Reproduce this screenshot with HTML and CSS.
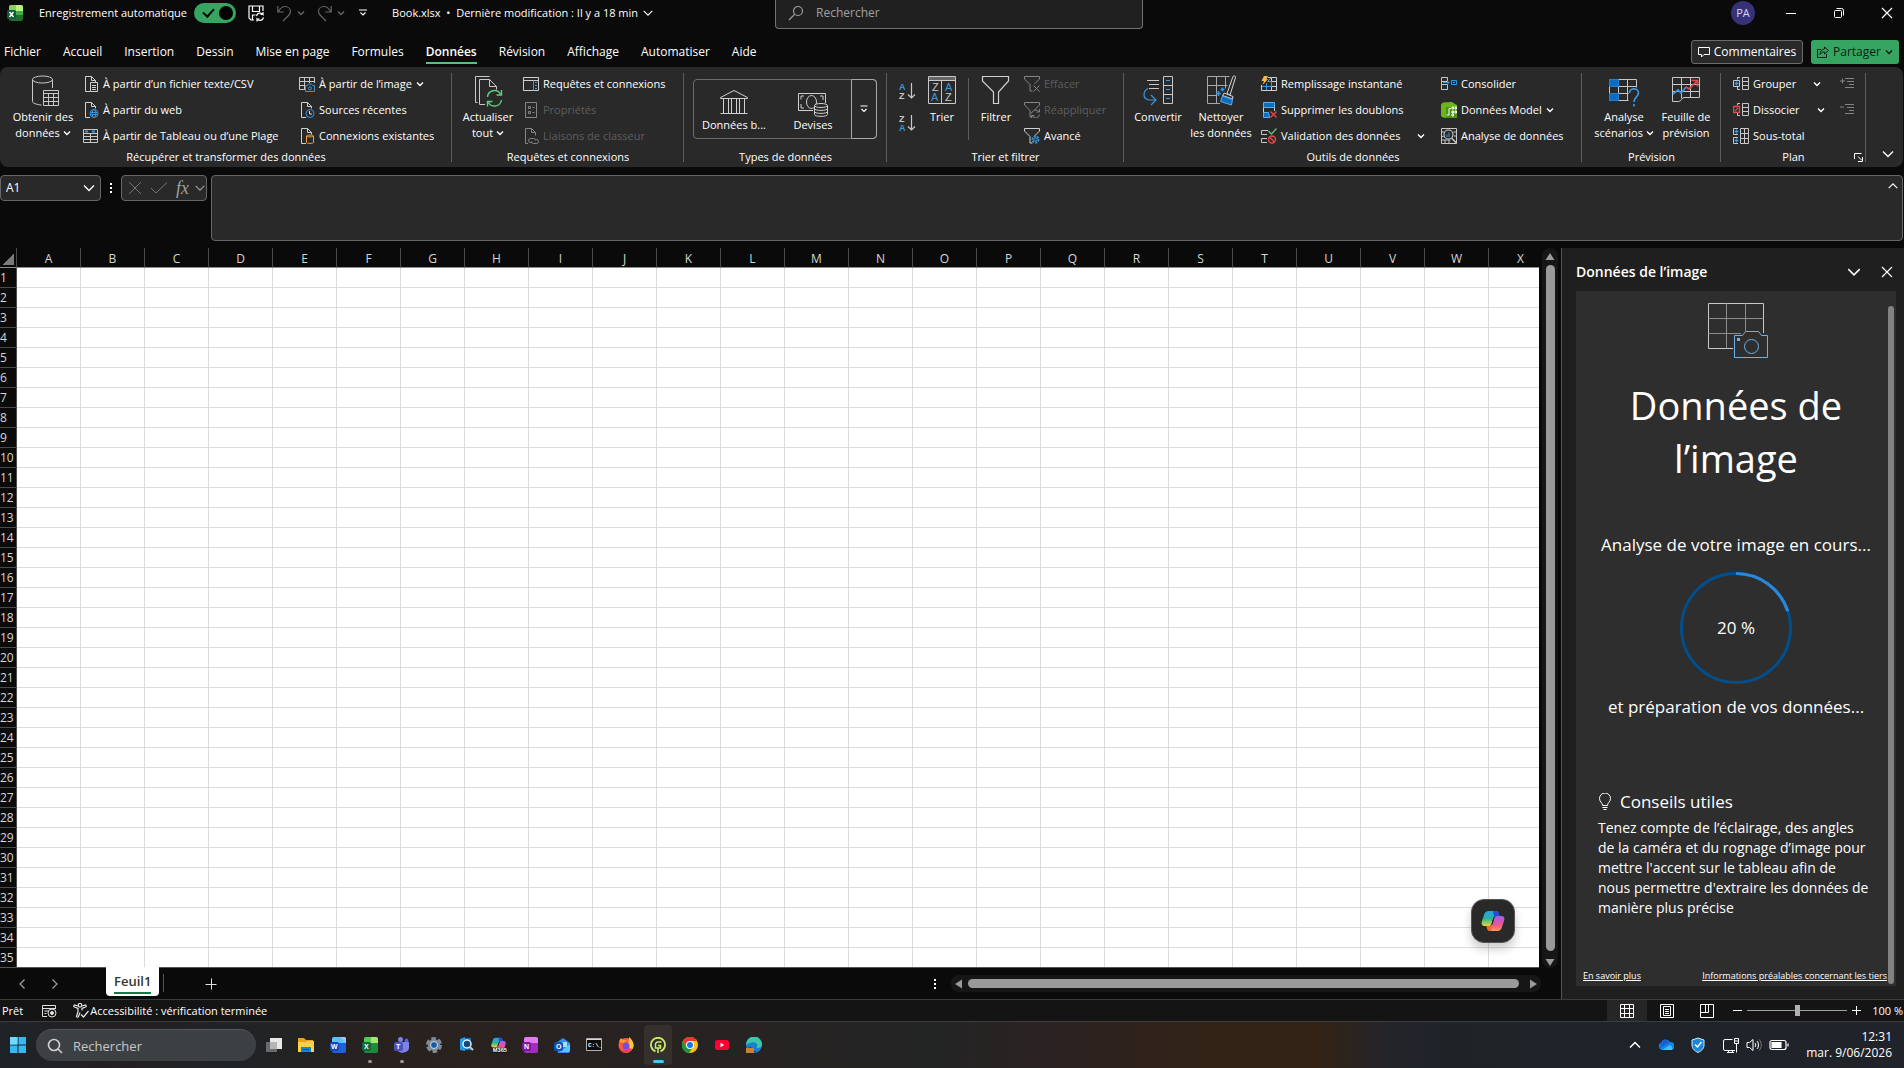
FILE: index.html
```html
<!DOCTYPE html>
<html lang="fr">
<head>
    <meta charset="UTF-8">
    <meta name="viewport" content="width=device-width, initial-scale=1.0">
    <title>Book.xlsx - Excel</title>
    <link rel="stylesheet" href="styles.css">
</head>
<body>
    <svg class="defs" aria-hidden="true">
        <symbol id="chev" viewBox="0 0 8 8"><path d="M1 2.5l3 3 3-3" fill="none" stroke="currentColor" stroke-width="1.4"/></symbol>
        <symbol id="chev-lg" viewBox="0 0 14 14"><path d="M2 4.500l5 5 5-5" fill="none" stroke="currentColor" stroke-width="1.3"/></symbol>
        <symbol id="page" viewBox="0 0 16 16"><path d="M7 15.500H2.500v-15h6l4 4v2M8.500.5v4h4" fill="none" stroke="#d0d0d0"/></symbol>
        <symbol id="funnel" viewBox="0 0 16 16"><path d="M.5.500h15v2.500l-5 5M.5.500V3l5.500 5.500v6.500h2.500" fill="none" stroke="currentColor"/></symbol>
        <symbol id="close" viewBox="0 0 12 12"><path d="M1 1l10 10M11 1L1 11" fill="none" stroke="currentColor" stroke-width="1.2"/></symbol>
        <linearGradient id="gcop1" x1="0" y1="0" x2="0" y2="1"><stop offset="0" stop-color="#2a9df4"/><stop offset=".5" stop-color="#27b59a"/><stop offset="1" stop-color="#f2d13b"/></linearGradient>
        <linearGradient id="gcop2" x1="0" y1="0" x2="0" y2="1"><stop offset="0" stop-color="#a45cf0"/><stop offset=".6" stop-color="#f0568c"/><stop offset="1" stop-color="#ff9a4d"/></linearGradient>
        <symbol id="copilot" viewBox="0 0 24 22">
            <path d="M8 1h7c2 0 2.500 1.500 3 3l.5 2h-3c-2 0-3 1-3.500 3l-1.500 5c-.5 1.500-1.500 2-3 2H4c-3 0-4-2-3-5l2-6c.8-2.500 2-4 5-4z" fill="url(#gcop1)"/>
            <path d="M12 1h3c2 0 2.500 1.500 3 3l.5 2h-3c-1 0-2 .5-2.500 1z" fill="#1d4fd8"/>
            <path d="M16 21H9c-2 0-2.500-1.500-3-3l-.5-2h3c2 0 3-1 3.500-3l1.500-5c.5-1.500 1.500-2 3-2H20c3 0 4 2 3 5l-2 6c-.8 2.500-2 4-5 4z" fill="url(#gcop2)"/>
            <path d="M5.500 16h3c1 0 1.800-.3 2.500-1l-1 6H9c-2 0-2.500-1.500-3-3z" fill="#f0662f"/>
            <path d="M13 8l-1.500 6h-1l2-7z" fill="#2b2b2b"/>
        </symbol>
    </svg>

    <header class="titlebar">
        <div class="title-left">
            <svg class="app-logo" width="16" height="16" viewBox="0 0 16 16"><rect x="2" width="14" height="16" rx="2" fill="#1d6f2b"/><path d="M4 0h5v6H2V2a2 2 0 0 1 2-2z" fill="#8ad05a"/><path d="M9 0h5a2 2 0 0 1 2 2v4H9z" fill="#bdf07c"/><path d="M9 6h7v4H9z" fill="#3fae49"/><rect y="5" width="9" height="9" rx="1.500" fill="#0f5c3a"/><path d="M2.500 7l4 5M6.500 7l-4 5" stroke="#fff" stroke-width="1.400"/></svg>
            <label class="autosave">Enregistrement automatique
                <input type="checkbox" class="switch" checked>
            </label>
            <button class="icon-btn save" aria-label="Enregistrer"><svg width="17" height="17" viewBox="0 0 17 17" fill="none" stroke="#fff" stroke-width="1.200"><path d="M6 15H3L1 13V1h14v5M4.500 1v5.500h7V1M4.500 15v-5h3"/><path d="M8.500 11a3.700 3.700 0 0 1 6.500-1.500V7M15 9.500h-2.500M15.500 12.500A3.700 3.700 0 0 1 9 14v2.500M9 14h2.500"/></svg></button>
            <button class="icon-btn dim" aria-label="Annuler"><svg width="15" height="17" viewBox="0 0 15 17" fill="none" stroke="currentColor" stroke-width="1.200"><path d="M.8 1v6h6M1 7c2-3.500 4-5.500 7-5.500 3.500 0 5.500 2.500 5.500 5 0 1.800-1 3-2 4L6 16"/></svg></button>
            <button class="icon-btn dim arrow" aria-label="Options annuler"><svg width="8" height="8"><use href="#chev"/></svg></button>
            <button class="icon-btn dim" aria-label="Rétablir"><svg width="15" height="17" viewBox="0 0 15 17" fill="none" stroke="currentColor" stroke-width="1.200"><path d="M14.200 1v6h-6M14 7c-2-3.500-4-5.500-7-5.500C3.500 1.500 1.500 4 1.500 6.500c0 1.800 1 3 2 4L9 16"/></svg></button>
            <button class="icon-btn dim arrow" aria-label="Options rétablir"><svg width="8" height="8"><use href="#chev"/></svg></button>
            <button class="icon-btn custom" aria-label="Personnaliser"><svg width="10" height="8" viewBox="0 0 10 8" fill="none" stroke="#fff" stroke-width="1.200"><path d="M1 1h8M2.500 3.500L5 6l2.500-2.500"/></svg></button>
            <button class="doc-title">Book.xlsx&nbsp; •&nbsp; Dernière modification : Il y a 18 min <svg width="12" height="12"><use href="#chev-lg"/></svg></button>
        </div>
        <label class="search">
            <svg width="16" height="16" viewBox="0 0 16 16" fill="none" stroke="#a0a0a0" stroke-width="1.200"><circle cx="10" cy="6" r="4.500"/><path d="M6.800 9.200L1 15"/></svg>
            <input type="text" placeholder="Rechercher" aria-label="Rechercher">
        </label>
        <div class="title-right">
            <span class="avatar">PA</span>
            <button class="win-btn" aria-label="Réduire"><svg width="12" height="12"><path d="M1 6.500h10" stroke="#fff"/></svg></button>
            <button class="win-btn" aria-label="Restaurer"><svg width="12" height="12" fill="none" stroke="#fff"><rect x="1.500" y="3.500" width="7" height="7" rx="1"/><path d="M3.500 1.500h5a2 2 0 0 1 2 2v5"/></svg></button>
            <button class="win-btn" aria-label="Fermer"><svg width="12" height="12"><use href="#close"/></svg></button>
        </div>
    </header>

    <nav class="tabs">
        <button class="tab">Fichier</button>
        <button class="tab">Accueil</button>
        <button class="tab">Insertion</button>
        <button class="tab">Dessin</button>
        <button class="tab">Mise en page</button>
        <button class="tab">Formules</button>
        <button class="tab active">Données</button>
        <button class="tab">Révision</button>
        <button class="tab">Affichage</button>
        <button class="tab">Automatiser</button>
        <button class="tab">Aide</button>
        <div class="tab-actions">
            <button class="comments"><svg width="12" height="12" viewBox="0 0 12 12" fill="none" stroke="#fff"><path d="M.5 1.500h11v7H6L3.500 11V8.500h-3z"/></svg>Commentaires</button>
            <button class="share"><svg width="12" height="12" viewBox="0 0 12 12" fill="none" stroke="#0a1f12"><path d="M4 3.500H.5v8h9V8M7.500 1l4 3.500-4 3.500V6C5 6 4 7 3 8.500 3.200 5.500 4.500 3.300 7.500 3z"/></svg>Partager<svg class="share-chev" width="8" height="8"><use href="#chev"/></svg></button>
        </div>
    </nav>

    <section class="ribbon">
        <div class="group g-get">
            <div class="group-body">
                <button class="big"><svg width="32" height="32" viewBox="-2 0 32 32" fill="none" stroke="#c8c8c8"><ellipse cx="13.500" cy="4.500" rx="10" ry="3.500"/><path d="M3.500 4.500v22c0 1.500 3.500 3 9 3.500M23.500 4.500V13"/><path d="M14.500 15.500h15v15h-15z"/><path d="M14.500 18.500h15M14.500 22.500h15M14.500 26.500h15M19.500 18.500v12M24.500 18.500v12"/></svg><span>Obtenir des<br>données <svg width="8" height="8"><use href="#chev"/></svg></span></button>
                <div class="col">
                    <button class="small"><svg width="16" height="16"><use href="#page"/><path d="M7.500 6.500h7v9h-7zM9 9.500h4M9 11.500h4M9 13.500h4" fill="#292929" stroke="#d0d0d0"/></svg>À partir d’un fichier texte/CSV</button>
                    <button class="small"><svg width="16" height="16"><use href="#page"/><circle cx="11" cy="11.500" r="4" fill="#292929" stroke="#3a96dd"/><ellipse cx="11" cy="11.500" rx="1.800" ry="4" fill="none" stroke="#3a96dd"/><path d="M7 10.500h8M7 12.500h8" stroke="#3a96dd"/></svg>À partir du web</button>
                    <button class="small"><svg width="16" height="16" fill="none" stroke="#c8c8c8"><path d="M.5 1.500h14v13H.5zM.5 5.500h14M.5 8.500h14M.5 11.500h14M7.500 5.500v9"/><path d="M2 3.500h3M9 3.500h3" stroke="#3a96dd" stroke-width="2"/></svg>À partir de Tableau ou d’une Plage</button>
                </div>
                <div class="col">
                    <button class="small"><svg width="16" height="16" fill="none" stroke="#c8c8c8"><path d="M6 13.500H.5v-12h15V7M.5 5.500h15M.5 9.500H6M5.500 1.500v12M10.500 1.500V7"/><path d="M6.500 9.500h2l1-1.500h3l1 1.500h2v6h-9z" stroke="#3a96dd" fill="#292929"/><circle cx="11" cy="12.300" r="1.500" stroke="#3a96dd"/></svg>À partir de l’image <svg width="8" height="8"><use href="#chev"/></svg></button>
                    <button class="small"><svg width="16" height="16"><use href="#page"/><circle cx="11" cy="11.500" r="4" fill="#292929" stroke="#3a96dd"/><path d="M10.500 9v3H13" fill="none" stroke="#ddd"/></svg>Sources récentes</button>
                    <button class="small"><svg width="16" height="16"><use href="#page"/><path d="M7.500 8c0-1.200 7-1.200 7 0v6.500c0 1.200-7 1.200-7 0zM7.500 8c0 1.200 7 1.200 7 0" fill="#292929" stroke="#f2a33c"/></svg>Connexions existantes</button>
                </div>
            </div>
            <div class="group-label">Récupérer et transformer des données</div>
        </div>

        <div class="group g-queries">
            <div class="group-body">
                <button class="big"><svg width="32" height="32" viewBox="0 0 32 32" fill="none" stroke="#c8c8c8"><path d="M5.500 27.500h-2v-26h14"/><path d="M13 29.500H7.500v-25h10l7 7v3M17.500 4.500v7h7"/><path d="M15.500 22a7 7 0 0 1 13-3M29.500 25a7 7 0 0 1-13 2.500M29.500 15v5h-5M15.500 31.500v-5h5" stroke="#5fd07a" stroke-width="1.400"/></svg><span>Actualiser<br>tout <svg width="8" height="8"><use href="#chev"/></svg></span></button>
                <div class="col">
                    <button class="small"><svg width="16" height="16" fill="none" stroke="#d0d0d0"><path d="M.5 1.500h15v13H.5zM.5 4.500h15"/><path d="M10.500 4.500v10M12 6.500h2M12 9.500h2M12 12.500h2" stroke="#3a96dd"/></svg>Requêtes et connexions</button>
                    <button class="small" disabled><svg width="16" height="16" fill="none" stroke="#858585"><path d="M2.500.500h11v15h-11zM5.500 4.500h2v2h-2zM5.500 9.500h2v2h-2zM9.500 5.500h2M9.500 10.500h2"/></svg>Propriétés</button>
                    <button class="small" disabled><svg width="16" height="16" fill="none" stroke="#858585"><path d="M5 15.500H2.500v-15h6l4 4v3M8.500.500v4h4"/><path d="M9 14.500H7.500a2 2 0 0 1 0-4h3a2 2 0 0 1 2 2M13 11.500h.5a2 2 0 0 1 0 4h-3a2 2 0 0 1-2-2"/></svg>Liaisons de classeur</button>
                </div>
            </div>
            <div class="group-label">Requêtes et connexions</div>
        </div>

        <div class="group g-types">
            <div class="group-body">
                <div class="gallery">
                    <button class="type"><svg width="30" height="28" viewBox="0 0 30 28" fill="none" stroke="#d0d0d0"><path d="M1.500 8.500L15 1.500l13.500 7v1h-27zM4.500 10v14M25.500 10v14M9.500 10v14M12.500 10v14M17.500 10v14M20.500 10v14M1.500 24.500h27"/></svg>Données b...</button>
                    <button class="type"><svg width="32" height="28" viewBox="0 0 32 28" fill="none" stroke="#d0d0d0"><path d="M16 21.500H1.500v-17h27V14"/><path d="M7 7H4v3.500M4 15v4h3M23 7h3v4"/><ellipse cx="14.500" cy="13" rx="5" ry="6.500"/><path d="M17.500 16.500v9c0 2.500 13 2.500 13 0v-9M17.500 19.500c0 2.500 13 2.500 13 0M17.500 22.500c0 2.500 13 2.500 13 0" fill="#292929"/><ellipse cx="24" cy="16.500" rx="6.500" ry="2" fill="#292929"/></svg>Devises</button>
                    <button class="more" aria-label="Autres"><svg width="8" height="8" viewBox="0 0 8 8" fill="none" stroke="#fff" stroke-width="1.200"><path d="M.5 1h7M1.500 4L4 6.500 6.500 4"/></svg></button>
                </div>
            </div>
            <div class="group-label">Types de données</div>
        </div>

        <div class="group g-sort">
            <div class="group-body">
                <div class="sort-col">
                    <button aria-label="Trier de A à Z"><svg width="18" height="20" viewBox="0 0 18 20"><text x="1" y="9" class="az blue">A</text><text x="1" y="18" class="az">Z</text><path d="M13.500 2v15M10 13.500l3.500 3.500 3.500-3.500" fill="none" stroke="#c8c8c8" stroke-width="1.200"/></svg></button>
                    <button aria-label="Trier de Z à A"><svg width="18" height="20" viewBox="0 0 18 20"><text x="1" y="9" class="az">Z</text><text x="1" y="18" class="az blue">A</text><path d="M13.500 2v15M10 13.500l3.500 3.500 3.500-3.500" fill="none" stroke="#c8c8c8" stroke-width="1.200"/></svg></button>
                </div>
                <button class="big trier"><svg width="32" height="32" viewBox="0 0 32 32"><path d="M2.500 1.500h27v27h-27zM2.500 5.500h27M15.500 5.500v23" fill="none" stroke="#c8c8c8"/><path d="M3 2h26v3H3z" fill="#666"/><text x="6" y="16" class="az lg">Z</text><text x="5" y="26" class="az lg blue">A</text><text x="19" y="16" class="az lg blue">A</text><text x="19" y="26" class="az lg">Z</text></svg><span>Trier</span></button>
                <i class="sep"></i>
                <button class="big filtrer"><svg width="32" height="32" viewBox="0 0 32 32" fill="none" stroke="#d0d0d0" stroke-width="1.200"><path d="M2.500 1.500h26v4.500L18.500 17v11.500h-5V17L2.500 6z"/></svg><span>Filtrer</span></button>
                <div class="col">
                    <button class="small" disabled><svg class="gray" width="16" height="16"><use href="#funnel"/><path d="M9.500 9.500l6 6M15.500 9.500l-6 6" stroke="#858585"/></svg>Effacer</button>
                    <button class="small" disabled><svg class="gray" width="16" height="16"><use href="#funnel"/><path d="M7.500 11.500a4 4 0 0 1 7-2M15.500 7v3h-3M15.500 12.500a4 4 0 0 1-7 2M7.500 16v-2.500h3" fill="none" stroke="#858585"/></svg>Réappliquer</button>
                    <button class="small"><svg class="light" width="16" height="16"><use href="#funnel"/><circle cx="11.500" cy="11.500" r="3" fill="#292929" stroke="#3a96dd" stroke-width="2" stroke-dasharray="2 1"/><circle cx="11.500" cy="11.500" r="1.500" fill="none" stroke="#3a96dd"/></svg>Avancé</button>
                </div>
            </div>
            <div class="group-label">Trier et filtrer</div>
        </div>

        <div class="group g-tools">
            <div class="group-body">
                <button class="big"><svg width="32" height="32" viewBox="0 0 32 32" fill="none" stroke="#c8c8c8"><path d="M5 5.500h12M7 9.500h10M7 13.500h10M21.500 1.500h9v27h-9zM21.500 10.500h9M21.500 19.500h9"/><path d="M24 5.500h4M24 14.500h4M24 23.500h4M6 13.500c-5 2.500-6 10.500 1 11.500h6.500M9 20l5 5-5 5" stroke="#3a96dd" stroke-width="1.200"/></svg><span>Convertir</span></button>
                <button class="big"><svg width="32" height="32" viewBox="0 0 32 32" fill="none" stroke="#a8a8a8"><path d="M15 28.500H2.500v-27h22M2.500 10.500h20M2.500 20.500h9M11.500 1.500v27M20.500 1.500v12"/><path d="M28 1.500c1-1 3-.5 2.500 1L25 20l-3-1.500z" fill="#292929" stroke="#d8d8d8"/><path d="M19 18l9 3.500-.5 2.500-10-3.500z" fill="#292929" stroke="#d8d8d8"/><path d="M17.500 21l10 3.500-1 5.500-11-3.500z" fill="#0f6cbd" stroke="#58aef0"/><path d="M13.500 16v5M11 18.500h5M17.500 12.500v4M15.500 14.500h4" stroke="#3a96dd" stroke-width="1.600"/></svg><span>Nettoyer<br>les données</span></button>
                <div class="col">
                    <button class="small"><svg width="16" height="16" fill="none"><path d="M7 1.500h8.500v13H.5V9M.5 10.500h15M5.500 7v7.500M10.500 1.500v13M7 5.500h8.500" stroke="#d0d0d0"/><path d="M10.500 5.500v5M10.500 5.500h-3M1 10.500h10M10.500 1.500l-4 4M5.500 14V7" stroke="#3a96dd"/><path d="M3 0h4L5.500 3H7L1.500 9 3 5H.5z" fill="#f7b84b"/></svg>Remplissage instantané</button>
                    <button class="small"><svg width="16" height="16"><path d="M2.500.500h11v5h-11zM2.500 10.500h5l1 5h-6z" fill="#0f6cbd" stroke="#58aef0"/><path d="M2.500 5.500v5M13.500 5.500V9" stroke="#d0d0d0"/><path d="M9.500 9.500l6 6M15.500 9.500l-6 6" stroke="#e8474c" stroke-width="1.300"/></svg>Supprimer les doublons</button>
                    <button class="small"><svg width="16" height="16" fill="none" stroke="#c8c8c8"><path d="M7 2.500H.5v4H6M6 10.500H.5v4H6"/><path d="M7.500 3l3 3L15.500.500" stroke="#5fc27a" stroke-width="1.300"/><circle cx="11" cy="11.500" r="3.500" stroke="#e8474c" stroke-width="1.400"/><path d="M8.500 9l5 5" stroke="#e8474c" stroke-width="1.400"/></svg>Validation des données<svg class="far" width="8" height="8"><use href="#chev"/></svg></button>
                </div>
                <div class="col">
                    <button class="small"><svg width="16" height="16" fill="none" stroke="#c8c8c8"><path d="M6.500 4V1.500h-6v4h6V4M.5 5.500v3M6.500 10v3.500h-6v-5h6V10"/><path d="M2 6.500h6M6 4.500l2 2-2 2M10.500 4.500h5v4h-5zM12 6.500h2" stroke="#3a96dd"/></svg>Consolider</button>
                    <button class="small"><svg width="16" height="16"><path d="M0 2.500L2 .500 11 0l3 2 2 1v12l-3 1H4l-3-1-1-1z" fill="#6bb51c"/><path d="M5 5h11v11H5z" fill="#4c9410"/><path d="M5.500 13H8V6.500M8 6.500h2M11 5h1.500v2H11zM14 5h1.500v2H14zM11 9h1.500v2H11zM14 9h1.500v2H14zM11 12h1.500v2H11z" fill="none" stroke="#fff"/></svg>Données Model <svg width="8" height="8"><use href="#chev"/></svg></button>
                    <button class="small"><svg width="16" height="16" fill="none" stroke="#c8c8c8"><path d="M.5.500h15v15H.5zM.5 4h3M.5 8.500h2M.5 12h9M4 12v3M8 12v3M12.500 4h3M13 8h2.500"/><circle cx="7.500" cy="6.500" r="4.500" fill="#292929" stroke-width="1.200"/><path d="M10.500 10l5 5" stroke-width="1.500"/><path d="M6 9V6.500M8 9V4.500" stroke="#3a96dd"/></svg>Analyse de données</button>
                </div>
            </div>
            <div class="group-label">Outils de données</div>
        </div>

        <div class="group g-forecast">
            <div class="group-body">
                <button class="big"><svg width="32" height="32" viewBox="0 0 32 32" fill="none" stroke="#c8c8c8"><path d="M1.500 4.500h27v8M1.500 25.500h19M1.500 4.500v21M10.500 4.500v21M19.500 4.500v21M1.500 11.500h27M1.500 18.500h19"/><path d="M1.500 4.500h9v7h-9zM1.500 18.500h9v7h-9z" fill="#0f6cbd" stroke="#1f7fd4"/><path d="M21.500 18c0-5.500 9-5.500 9 0 0 4-4.500 4-4.500 9M26 29v2.500" stroke="#3a96dd" stroke-width="1.700"/></svg><span>Analyse<br>scénarios <svg width="8" height="8"><use href="#chev"/></svg></span></button>
                <button class="big"><svg width="32" height="32" viewBox="0 0 32 32" fill="none" stroke="#c8c8c8"><path d="M14 22.500h15.500v-20h-27v24h6c3 0 3-4 6-4M2.500 9.500h27M2.500 16.500h27M11.500 2.500v21M20.500 2.500v20"/><path d="M3 19l5-4 3 3 5-6" stroke="#3a96dd" stroke-width="1.700"/><path d="M16 12l3 2 8-8M21.500 5.500H27.500v6" stroke="#e8474c" stroke-width="1.700"/></svg><span>Feuille de<br>prévision</span></button>
            </div>
            <div class="group-label">Prévision</div>
        </div>

        <div class="group g-plan">
            <div class="group-body">
                <div class="col">
                    <button class="small"><svg width="16" height="16" fill="none" stroke="#c8c8c8"><path d="M7 1.500H4.500v2M4.500 11v2.500H7M9.500 1.500h6v12h-6zM9.500 5.500h6M9.500 9.500h6"/><path d="M.5 4.500h6v6h-6z"/><path d="M3.500 5.500v4M1.500 7.500h4" stroke="#3a96dd" stroke-width="1.500"/></svg>Grouper<svg class="far" width="8" height="8"><use href="#chev"/></svg></button>
                    <button class="small"><svg width="16" height="16" fill="none" stroke="#c8c8c8"><path d="M7 1.500H4.500v2M4.500 11v2.500H7M9.500 1.500h6v12h-6zM9.500 5.500h6M9.500 9.500h6"/><path d="M.5 4.500h6v6h-6zM2 9l3-3" stroke="#e8474c" stroke-width="1.300"/></svg>Dissocier<svg class="far" width="8" height="8"><use href="#chev"/></svg></button>
                    <button class="small"><svg width="16" height="16" fill="none" stroke="#c8c8c8"><path d="M7.500.500h8v15h-8zM7.500 5.500h8M7.500 10.500h8M11.500.500v15M5 .5H.5v6H5M5 9.500H.5v6H5"/><path d="M3.500 1.500v4M1.500 3.500h4M3.500 10.500v4M1.500 12.500h4" stroke="#3a96dd" stroke-width="1.300"/></svg>Sous-total</button>
                </div>
                <div class="col outline-col">
                    <button class="small" aria-label="Afficher les détails" disabled><svg width="16" height="16" fill="none" stroke="#858585"><path d="M1 5h5M3.500 2.500v5M6 2.500h9M8 5.500h7M10 8.500h5M6 11.500h9"/></svg></button>
                    <button class="small" aria-label="Masquer" disabled><svg width="16" height="16" fill="none" stroke="#858585"><path d="M1 5h4M6 2.500h9M8 5.500h7M10 8.500h5M6 11.500h9"/></svg></button>
                </div>
            </div>
            <div class="group-label">Plan<button class="launcher" aria-label="Paramètres du plan"><svg width="9" height="9" fill="none" stroke="#fff"><path d="M.5 6V.500h7M4 3.500l4 4M8.500 4v4.500H4"/></svg></button></div>
        </div>
        <button class="collapse" aria-label="Réduire le ruban"><svg width="14" height="14"><use href="#chev-lg"/></svg></button>
    </section>

    <section class="formula-row">
        <div class="name-box"><input type="text" value="A1" aria-label="Zone Nom"><svg width="14" height="14"><use href="#chev-lg"/></svg></div>
        <svg class="dots" width="4" height="12" fill="#fff"><path d="M1 1h2v2H1zM1 5h2v2H1zM1 9h2v2H1z"/></svg>
        <div class="fx-box">
            <button aria-label="Annuler la saisie"><svg width="14" height="14" fill="none" stroke="#777"><path d="M1 1l12 12M13 1L1 13"/></svg></button>
            <button aria-label="Valider"><svg width="18" height="14" fill="none" stroke="#777"><path d="M1 7l5 5L17 1.500"/></svg></button>
            <button class="fx">fx<svg width="12" height="12"><use href="#chev-lg"/></svg></button>
        </div>
        <div class="formula"><textarea aria-label="Barre de formule"></textarea><svg class="flip" width="12" height="12"><use href="#chev-lg"/></svg></div>
    </section>

    <main class="workspace">
        <section class="book">
            <div class="sheet-row">
                <div class="sheet">
                    <table id="grid"></table>
                    <button class="copilot" aria-label="Copilot"><svg width="24" height="22"><use href="#copilot"/></svg></button>
                </div>
                <div class="vscroll"><svg width="10" height="8"><path d="M5 0l4.500 7h-9z" fill="#9a9a9a"/></svg><i></i><svg width="10" height="8"><path d="M.5 1h9L5 8z" fill="#9a9a9a"/></svg></div>
            </div>
            <div class="sheet-tabs">
                <button class="nav-arrow" aria-label="Feuille précédente"><svg width="8" height="12" fill="none" stroke="#a0a0a0" stroke-width="1.200"><path d="M6.500 1.500L2 6l4.500 4.500"/></svg></button>
                <button class="nav-arrow" aria-label="Feuille suivante"><svg width="8" height="12" fill="none" stroke="#a0a0a0" stroke-width="1.200"><path d="M1.500 1.500L6 6l-4.500 4.500"/></svg></button>
                <button class="sheet-tab"><span>Feuil1</span></button>
                <button class="add" aria-label="Nouvelle feuille"><svg width="12" height="12" stroke="#e0e0e0"><path d="M.5 6.500h11M6.500.500v11"/></svg></button>
                <svg class="dots" width="4" height="12" fill="#fff"><path d="M1 1h2v2H1zM1 5h2v2H1zM1 9h2v2H1z"/></svg>
                <div class="hscroll"><svg width="8" height="10"><path d="M7 .5v9L0 5z" fill="#9a9a9a"/></svg><i></i><svg width="8" height="10"><path d="M1 .5v9L8 5z" fill="#9a9a9a"/></svg></div>
            </div>
        </section>

        <aside class="panel">
            <div class="panel-head">
                <h2>Données de l’image</h2>
                <button aria-label="Options du volet"><svg width="16" height="16"><use href="#chev-lg"/></svg></button>
                <button aria-label="Fermer le volet"><svg width="12" height="12"><use href="#close"/></svg></button>
            </div>
            <div class="panel-body">
                <svg class="hero" width="56" height="56" fill="none" stroke="#c8c8c8"><path d="M25 45.500H.5V.500h55V30"/><path d="M.5 15.500h55M.5 30.500H33M18.500.500v45M37.500.500V28" stroke="#8c8c8c"/><path d="M26.500 32.500h8l3-4h13l3 4h6v22h-33z" fill="#2e2e2e" stroke="#6cb2e6"/><circle cx="43.500" cy="43.500" r="7" stroke="#6cb2e6"/><path d="M29 35h3v3h-3z" fill="#6cb2e6" stroke="none"/></svg>
                <h1>Données de l’image</h1>
                <p class="step">Analyse de votre image en cours...</p>
                <div class="progress">
                    <svg width="112" height="112" viewBox="0 0 112 112" fill="none" stroke-width="3"><circle cx="56" cy="56" r="54.500" stroke="#004e8c"/><path d="M56 1.500A54.500 54.500 0 0 1 107.800 39.200" stroke="#2b88d8"/></svg>
                    <span>20 %</span>
                </div>
                <p class="step">et préparation de vos données...</p>
                <h3><svg width="14" height="18" viewBox="0 0 14 18" fill="none" stroke="#fff"><path d="M4.500 12.500c0-3-3-3.500-3-7a5.500 5.500 0 0 1 11 0c0 3.500-3 4-3 7zM4.500 14.500h5M5.500 16.500h3"/></svg>Conseils utiles</h3>
                <p class="tips">Tenez compte de l’éclairage, des angles de la caméra et du rognage d’image pour mettre l'accent sur le tableau afin de nous permettre d'extraire les données de manière plus précise</p>
                <div class="links"><a href="#">En savoir plus</a><a href="#">Informations préalables concernant les tiers</a></div>
                <i class="panel-thumb"></i>
            </div>
        </aside>
    </main>

    <footer class="status">
        <span>Prêt</span>
        <svg class="macro" width="15" height="14" fill="none" stroke="#e0e0e0"><path d="M5 12.500H.5v-11h13V5M.5 4.500h13M2.500 7h4M2.500 9.500h2"/><circle cx="10" cy="9" r="4"/><circle cx="10" cy="9" r="1.500" fill="#e0e0e0"/></svg>
        <button class="access"><svg width="16" height="15" fill="none" stroke="#e8e8e8" stroke-width="1.200"><circle cx="7" cy="2.300" r="1.800"/><path d="M5 3L1.500 2c-1 .5-1 1.500 0 2L5 5.500v3l-1.500 5c.5 1 1.500 1 2 0L7 9.500M9 3l3.500-1c1 .5 1 1.500 0 2L9 5.500v2M8 11.500l2.500 2.500 5-6"/></svg>Accessibilité : vérification terminée</button>
        <div class="views">
            <button class="view on" aria-label="Normal"><svg width="14" height="14" fill="none" stroke="#fff"><path d="M.5.500h13v13H.5zM.5 4.500h13M.5 9.500h13M4.500.500v13M9.500.500v13"/></svg></button>
            <button class="view" aria-label="Mise en page"><svg width="14" height="14" fill="none" stroke="#fff"><path d="M.5.500h13v13H.5zM3.500 2.500h7v9h-7zM5 5.500h4M5 7.500h4M5 9.500h4"/></svg></button>
            <button class="view" aria-label="Sauts de page"><svg width="14" height="14" fill="none" stroke="#fff"><path d="M.5.500h13v13H.5zM.5 8.500h8v-8M5.500.500v8"/></svg></button>
        </div>
        <button aria-label="Zoom arrière"><svg width="9" height="9" stroke="#fff"><path d="M0 4.500h9"/></svg></button>
        <input type="range" class="zoom" min="0" max="100" value="50" aria-label="Zoom">
        <button aria-label="Zoom avant"><svg width="9" height="9" stroke="#fff"><path d="M0 4.500h9M4.500 0v9"/></svg></button>
        <span class="pct">100 %</span>
    </footer>

    <footer class="taskbar">
        <button class="start" aria-label="Démarrer"><svg width="16" height="16"><path d="M0 0h7.500v7.500H0zM8.500 0H16v7.500H8.500zM0 8.500h7.500V16H0zM8.500 8.500H16V16H8.500z" fill="#35b8f5"/><path d="M0 0h7.500v7.500H0z" fill="#6fdcff"/></svg></button>
        <label class="task-search"><svg width="16" height="16" fill="none" stroke="#d0d0d0" stroke-width="1.600"><circle cx="7" cy="7" r="5.500"/><path d="M11 11l4 4"/></svg><input type="text" placeholder="Rechercher" aria-label="Rechercher dans Windows"></label>
        <div class="apps">
            <button aria-label="Vue des tâches"><svg width="16" height="16"><path d="M0 5h11v10H0z" fill="#6b6b6b"/><path d="M4 1h12v11H4z" fill="#e8e8e8"/><path d="M4 5h7v7H4z" fill="#b5b5b5"/></svg></button>
            <button aria-label="Explorateur"><svg width="16" height="16"><path d="M0 1h6l2 2h7v4H0z" fill="#e8a317"/><path d="M0 5h8l1-1h7v11H0z" fill="#ffcf48"/><path d="M3 10h10v5H3z" fill="#1683d8"/><path d="M5 12.500h6" stroke="#0a4f8f"/></svg></button>
            <button aria-label="Word"><svg width="16" height="16"><rect x="2" width="14" height="16" rx="2" fill="#1f5fe0"/><path d="M4 0h10a2 2 0 0 1 2 2v4H2V2a2 2 0 0 1 2-2z" fill="#5cc0ff"/><path d="M10 0h4a2 2 0 0 1 2 2v4z" fill="#a9c0ff"/><rect y="5" width="9" height="9" rx="2" fill="#1746b8"/><text x="1" y="12" class="logo">W</text></svg></button>
            <button class="running" aria-label="Excel"><svg width="16" height="16"><rect x="2" width="14" height="16" rx="2" fill="#1f8a3c"/><path d="M4 0h5v6H2V2a2 2 0 0 1 2-2z" fill="#55c95a"/><path d="M9 0h5a2 2 0 0 1 2 2v4H9z" fill="#a4e86a"/><rect y="5" width="9" height="9" rx="2" fill="#0f6b3a"/><text x="2" y="12" class="logo">X</text></svg></button>
            <button class="running" aria-label="Teams"><svg width="16" height="16"><circle cx="6.500" cy="2.500" r="2.500" fill="#7b83eb"/><circle cx="12.500" cy="3.500" r="2" fill="#5a62d6"/><path d="M3 5h12v6c0 5-11 7-12 1z" fill="#7b83eb"/><rect y="5" width="9" height="9" rx="2" fill="#4b53bc"/><text x="2" y="12" class="logo">T</text></svg></button>
            <button aria-label="Paramètres"><svg width="16" height="16"><circle cx="8" cy="8" r="6" fill="#7f8b97"/><circle cx="8" cy="8" r="6.500" fill="none" stroke="#7f8b97" stroke-width="3" stroke-dasharray="4.500 2.300"/><circle cx="8" cy="8" r="3.500" fill="#0f5ca8" stroke="#d7dde3"/></svg></button>
            <button aria-label="Recherche de fichiers"><svg width="16" height="16"><path d="M2 2l5-2v14l-5-1z" fill="#1f9be8"/><path d="M7 1h6v12H7z" fill="#0f6fc2"/><circle cx="9" cy="7" r="4" fill="#164a7a" stroke="#e6f2ff" stroke-width="1.500"/><path d="M12 10l3 3" stroke="#ccc" stroke-width="2"/></svg></button>
            <button aria-label="Microsoft 365 Copilot"><svg width="17" height="16" viewBox="0 0 24 22"><use href="#copilot" width="24" height="20"/><path d="M3 15h21v7H3z" fill="#111"/><text x="4" y="21" class="m365">M365</text></svg></button>
            <button aria-label="OneNote"><svg width="16" height="16"><rect x="2" width="14" height="16" rx="2" fill="#a32bc0"/><path d="M4 0h10a2 2 0 0 1 2 2v4H2V2a2 2 0 0 1 2-2z" fill="#e07cf0"/><rect y="5" width="9" height="9" rx="2" fill="#7a1a94"/><text x="2" y="12" class="logo">N</text></svg></button>
            <button aria-label="Outlook"><svg width="16" height="16"><path d="M2 6l7-5 7 5v8a2 2 0 0 1-2 2H4z" fill="#2f8df0"/><path d="M5 5h8v5H5z" fill="#a8dcff"/><path d="M16 7L6 15h8a2 2 0 0 0 2-2z" fill="#5cc6ff"/><rect y="5" width="9" height="9" rx="2" fill="#0f52b8"/><text x="2" y="12" class="logo">O</text></svg></button>
            <button aria-label="Invite de commandes"><svg width="16" height="14"><path d="M.5.500h15v12H.5z" fill="#0c0c0c" stroke="#b0b0b0"/><path d="M1 1.500h14" stroke="#d8d8d8"/><text x="2" y="9" class="cmd">C:\_</text></svg></button>
            <button aria-label="Firefox"><svg width="16" height="16"><circle cx="8" cy="8.500" r="7.500" fill="#ff5a36"/><path d="M11 0c4 3 6 8 3.500 12l-5-2 1-5z" fill="#ffc43a"/><path d="M1 5c1-3 2-4 2-4l2 2h4l-3 3z" fill="#ff9a2e"/><circle cx="8" cy="9" r="3.500" fill="#7a4be0"/><path d="M1.500 12c3 4 9 4 12 0-4 1-8 2-12 0z" fill="#f0337a"/></svg></button>
            <button class="current" aria-label="Greenshot"><svg width="16" height="16" fill="none" stroke="#cdec6c"><path d="M5.500 14.300a7 7 0 1 1 5 0" stroke-width="1.800"/><path d="M11.500 5H8a2.500 2.500 0 0 0-2.500 2.500V11h5V8.500H8M8 11v5" stroke-width="1.500"/></svg></button>
            <button aria-label="Chrome"><svg width="16" height="16"><circle cx="8" cy="8" r="8" fill="#fbc116"/><path d="M1 4A8 8 0 0 1 15 4H8l-3.500 6z" fill="#e33b2e"/><path d="M1 4a8 8 0 0 0 6 12l4-6-6.500 0z" fill="#229342"/><circle cx="8" cy="8" r="4" fill="#fff"/><circle cx="8" cy="8" r="3" fill="#1a73e8"/></svg></button>
            <button aria-label="YouTube"><svg width="14" height="10"><rect width="14" height="10" rx="2.500" fill="#ff0033"/><path d="M5.500 2.800v4.400L9.200 5z" fill="#fff"/></svg></button>
            <button aria-label="Edge"><svg width="16" height="16"><circle cx="8" cy="8" r="8" fill="#1b7fcf"/><path d="M0 8a8 8 0 0 1 16-1c0 3-2 4-5 4-1-1 1-2 0-4s-6-3-11 1z" fill="#3cc8a8"/><path d="M5 9c0 3 2 5 6 5-3 3-8 2-10-2z" fill="#0f4d94"/><path d="M0 11h8v5H0z" fill="#c9812a"/></svg></button>
        </div>
        <div class="tray">
            <button aria-label="Icônes masquées"><svg width="12" height="8" fill="none" stroke="#fff" stroke-width="1.500"><path d="M1 6.500l5-5 5 5"/></svg></button>
            <button aria-label="OneDrive"><svg width="16" height="12"><path d="M4 11a4 4 0 0 1-1-7.500A5 5 0 0 1 12 3a4 4 0 0 1 1 8z" fill="#1583e8"/><path d="M4 11l8-5a4 4 0 0 1 2 5z" fill="#3cc0ff"/><path d="M3 3.500A5 5 0 0 1 12 3L2 9z" fill="#1a5fd0"/></svg></button>
            <button aria-label="Sécurité"><svg width="14" height="16"><path d="M7 1l6 2v5c0 4-3 6-6 7.500C4 14 1 12 1 8V3z" fill="#1a86dd" stroke="#d5e8f7"/><path d="M4 7.500L6.500 10 10.500 5" fill="none" stroke="#fff" stroke-width="1.500"/></svg></button>
            <button class="sys" aria-label="Réseau, son et batterie"><svg width="17" height="17" fill="none" stroke="#fff"><path d="M10.500 2.500H3a1.500 1.500 0 0 0-1.500 1.500v8A1.500 1.500 0 0 0 3 13.500h10M5 15.500h7M6.500 13.500v2M10.500 13.500v2M12.500 1.500h4v5h-4zM12.500 4h4M14.500 6.500v9"/></svg><svg width="16" height="14" fill="none" stroke="#fff"><path d="M1 4.500h2.500L7 1.500v11l-3.500-3H1zM9 5c1 1 1 3 0 4M11 3c2 2 2 6 0 8"/><path d="M13 1.500c3 3 3 8 0 11" stroke="#777"/></svg><svg width="20" height="12" fill="none" stroke="#fff" stroke-width="1.200"><rect x="1" y="1.500" width="16" height="9" rx="2"/><path d="M3 3.500h9v5H3z" fill="#fff"/><path d="M19 4.500v3"/></svg></button>
            <button class="clock">12:31<br>mar. 9/06/2026</button>
        </div>
    </footer>

    <script>
        const table = document.getElementById('grid');
        const letters = 'ABCDEFGHIJKLMNOPQRSTUVWX'.split('');

        let html = '<colgroup><col class="col-head">' + letters.map(() => '<col class="col-cell">').join('') + '</colgroup>';
        html += '<thead><tr><th class="corner"></th>' + letters.map(l => `<th scope="col">${l}</th>`).join('') + '</tr></thead><tbody>';
        for (let i = 1; i <= 35; i++) {
            html += `<tr><th scope="row">${i}</th>` + '<td></td>'.repeat(letters.length) + '</tr>';
        }
        table.innerHTML = html + '</tbody>';
    </script>
</body>
</html>
```
FILE: styles.css
```css
* {
    box-sizing: border-box;
}

body {
    margin: 0;
    height: 100vh;
    display: flex;
    flex-direction: column;
    background-color: #0a0a0a;
    color: #ffffff;
    font-family: 'Open Sans', 'Noto Sans', sans-serif;
    font-size: 11px;
    line-height: 16px;
    overflow: hidden;
}

button,
input,
textarea {
    font: inherit;
    color: inherit;
    background: none;
    border: none;
    padding: 0;
    margin: 0;
    outline: none;
    white-space: nowrap;
}

svg {
    flex: none;
}

.defs {
    position: absolute;
    width: 0;
    height: 0;
}

h1, h2, h3, p {
    margin: 0;
    font-weight: normal;
}

/* Barre de titre */
.titlebar {
    display: grid;
    grid-template-columns: 775fr 368px 761fr;
    height: 32px;
    flex: none;
}

.title-left,
.title-right {
    display: flex;
    align-items: center;
    height: 26px;
}

.title-left {
    padding-left: 7px;
}

.autosave {
    display: flex;
    align-items: center;
    gap: 7px;
    margin-left: 16px;
}

.switch {
    appearance: none;
    width: 42px;
    height: 20px;
    border-radius: 10px;
    background: #36a561;
    position: relative;
}

.switch::before {
    content: '';
    position: absolute;
    left: 9px;
    top: 5px;
    width: 9px;
    height: 5px;
    border: solid #000000;
    border-width: 0 0 2px 2px;
    transform: rotate(-48deg);
}

.switch::after {
    content: '';
    position: absolute;
    right: 3px;
    top: 3px;
    width: 14px;
    height: 14px;
    border-radius: 50%;
    background: #000000;
}

.icon-btn {
    display: flex;
    margin-left: 12px;
}

.icon-btn.arrow {
    margin-left: 5px;
}

.icon-btn.custom {
    margin-left: 13px;
}

.dim {
    color: #666666;
}

.doc-title {
    display: flex;
    align-items: center;
    gap: 4px;
    margin-left: 24px;
}

.search {
    display: flex;
    align-items: center;
    gap: 12px;
    height: 29px;
    padding: 0 12px 2px;
    background: #202020;
    border: 1px solid #727272;
    border-top: none;
    border-radius: 0 0 4px 4px;
    font-size: 12px;
}

.search input {
    flex: 1;
}

input::placeholder {
    color: #a0a0a0;
    opacity: 1;
}

.title-right {
    justify-content: flex-end;
    padding-right: 11px;
    gap: 36px;
}

.avatar {
    width: 24px;
    height: 24px;
    border-radius: 50%;
    background: #373277;
    color: #d8d4ff;
    line-height: 24px;
    text-align: center;
    font-size: 11px;
    margin-right: -6px;
}

.win-btn {
    display: flex;
}

/* Onglets */
.tabs {
    display: flex;
    align-items: center;
    gap: 22px;
    height: 35px;
    padding: 4px 5px 0 4px;
    font-size: 12px;
    flex: none;
}

.tab {
    height: 24px;
    padding-top: 3px;
    border-bottom: 2px solid transparent;
}

.tab.active {
    font-weight: 600;
    border-bottom-color: #5fbf7f;
}

.tab-actions {
    display: flex;
    gap: 8px;
    margin-left: auto;
}

.comments,
.share {
    display: flex;
    align-items: center;
    justify-content: center;
    gap: 4px;
    height: 24px;
    border-radius: 3px;
}

.comments {
    width: 112px;
    background: #292929;
    border: 1px solid #6b6b6b;
}

.share {
    width: 88px;
    background: #36a561;
    color: #0a1f12;
}

/* Ruban */
.ribbon {
    display: grid;
    grid-template-columns: 452px 232px 203px 237px 458px 139px 145px 1fr;
    height: 100px;
    margin-right: 1px;
    border-radius: 8px;
    background: #292929;
    flex: none;
}

.group {
    display: flex;
    flex-direction: column;
    padding-top: 4px;
    background: linear-gradient(#5c5c5c, #5c5c5c) right center / 1px 89px no-repeat;
}

.group-body {
    display: grid;
    height: 78px;
}

.g-get .group-body {
    grid-template-columns: 80px 216px 1fr;
    padding-left: 3px;
}

.g-queries .group-body {
    grid-template-columns: 70px 1fr;
    padding-left: 1px;
}

.g-sort .group-body {
    grid-template-columns: 26px 52px 1px 54px 1fr;
    padding-left: 3px;
}

.g-tools .group-body {
    grid-template-columns: 62px 64px 188px 1fr;
    padding-left: 3px;
}

.g-tools .big {
    justify-self: center;
}

.g-tools .big + .col {
    margin-left: 8px;
}

.g-forecast .group-body {
    grid-template-columns: 64px 60px;
    padding-left: 10px;
}

.g-plan .group-body {
    grid-template-columns: 106px 1fr;
    padding-left: 12px;
}

.group-label {
    text-align: center;
    position: relative;
}

.col {
    display: grid;
    grid-template-rows: repeat(3, 26px);
}

.small {
    display: flex;
    align-items: center;
    gap: 4px;
    text-align: left;
}

.small:disabled {
    color: #5e5e5e;
}

.far {
    margin-left: 13px;
}

.gray {
    color: #858585;
}

.light {
    color: #d0d0d0;
}

.big {
    display: flex;
    flex-direction: column;
    align-items: center;
    gap: 2px;
    padding-top: 4px;
    text-align: center;
}

.gallery {
    display: grid;
    grid-template-columns: 80px 1fr 24px;
    height: 60px;
    margin: 8px 10px 0 9px;
    border: 1px solid #6b6b6b;
    border-radius: 4px;
}

.type {
    display: flex;
    flex-direction: column;
    align-items: center;
    justify-content: flex-end;
    padding-bottom: 5px;
}

.more {
    margin: -1px;
    border: 1px solid #a8a8a8;
    border-radius: 0 4px 4px 0;
}

.sort-col {
    display: flex;
    flex-direction: column;
    gap: 12px;
    padding: 10px 0 0 8px;
}

.sort-col button {
    display: flex;
}

.az {
    font: 700 9px 'Liberation Sans', sans-serif;
    fill: #c8c8c8;
}

.az.lg {
    font-size: 11px;
    font-weight: 400;
}

.az.blue {
    fill: #3a96dd;
}

.sep {
    background: #5c5c5c;
    margin: 7px 0 9px;
}

.g-sort .col {
    padding-left: 1px;
}

.launcher {
    position: absolute;
    right: 3px;
    top: 4px;
    display: flex;
}

.collapse {
    align-self: end;
    justify-self: center;
    padding: 0 0 6px 6px;
    display: flex;
}

/* Barre de formule */
.formula-row {
    display: flex;
    align-items: flex-start;
    padding: 8px 1px 7px 0;
    flex: none;
}

.name-box,
.fx-box,
.formula {
    display: flex;
    background: #292929;
    border: 1px solid #666666;
    border-radius: 4px;
}

.name-box {
    width: 101px;
    height: 26px;
    align-items: center;
    padding: 0 4px 0 5px;
    font-size: 12px;
}

.name-box input {
    flex: 1;
    min-width: 0;
}

.formula-row .dots {
    margin: 7px 8px 0;
}

.fx-box {
    width: 86px;
    height: 26px;
    align-items: center;
    gap: 8px;
    padding-left: 6px;
    color: #a0a0a0;
}

.fx-box button {
    display: flex;
    align-items: center;
}

.fx-box .fx {
    gap: 5px;
    font: italic 18px 'Liberation Serif', serif;
}

.formula {
    flex: 1;
    height: 66px;
    margin-left: 4px;
    padding: 4px 3px;
}

.formula textarea {
    flex: 1;
    resize: none;
}

.flip {
    transform: rotate(180deg);
}

/* Feuille */
.workspace {
    display: flex;
    flex: 1;
    min-height: 0;
}

.book {
    display: flex;
    flex-direction: column;
    flex: 1;
    min-width: 0;
}

.sheet-row {
    display: flex;
    flex: 1;
    min-height: 0;
}

.sheet {
    flex: 1;
    min-width: 0;
    overflow: hidden;
    position: relative;
    border-bottom: 1px solid #555555;
}

table {
    border-collapse: separate;
    border-spacing: 0;
    table-layout: fixed;
    width: 1553px;
    font-size: 12px;
}

.col-head {
    width: 17px;
}

.col-cell {
    width: 64px;
}

th {
    padding: 0;
    height: 20px;
    font-weight: normal;
    color: #d6d6d6;
    border-right: 1px solid #4a4a4a;
    border-bottom: 1px solid #4a4a4a;
}

td {
    padding: 0;
    height: 20px;
    background: #ffffff;
    border-right: 1px solid #dcdcdc;
    border-bottom: 1px solid #dcdcdc;
}

thead th {
    padding-top: 2px;
    border-bottom-color: #8c8c8c;
}

tbody th {
    padding-top: 1px;
    text-align: left;
}

.corner {
    background: linear-gradient(135deg, transparent 54%, #7a7a7a 54%) 0 5px / 14px 12px no-repeat;
}

.copilot {
    position: absolute;
    right: 24px;
    bottom: 24px;
    width: 44px;
    height: 44px;
    border: 1px solid #555555;
    border-radius: 13px;
    background: #292929;
    display: flex;
    align-items: center;
    justify-content: center;
    box-shadow: 0 6px 10px rgba(0, 0, 0, 0.2);
}

.vscroll {
    width: 16px;
    margin: 0 3px;
    padding: 5px 0 2px;
    display: flex;
    flex-direction: column;
    align-items: center;
    gap: 4px;
    border-radius: 8px;
    background: #161616;
}

.vscroll i {
    flex: 1;
    width: 9px;
    margin-bottom: 3px;
    border-radius: 5px;
    background: #9a9a9a;
}

.sheet-tabs {
    display: flex;
    align-items: center;
    height: 31px;
    padding: 0 20px 0 18px;
    flex: none;
}

.nav-arrow {
    display: flex;
    margin-right: 25px;
}

.sheet-tab {
    align-self: flex-start;
    height: 29px;
    margin: -1px 0 0 22px;
    padding: 0 8px;
    background: #ffffff;
    color: #333333;
    border-radius: 0 0 4px 4px;
    font-size: 13px;
    font-weight: 600;
    position: relative;
}

.sheet-tab span {
    display: block;
    line-height: 22px;
    border-bottom: 2px solid #107c41;
}

.sheet-tab::after {
    content: '';
    position: absolute;
    right: -5px;
    top: 7px;
    height: 18px;
    border-right: 1px solid #555555;
}

.add {
    display: flex;
    margin-left: 46px;
}

.sheet-tabs .dots {
    margin-left: auto;
}

.hscroll {
    width: 590px;
    height: 17px;
    margin-left: 14px;
    padding: 0 4px;
    display: flex;
    align-items: center;
    gap: 5px;
    border-radius: 8px;
    background: #161616;
}

.hscroll i {
    flex: 1;
    height: 9px;
    margin-right: 5px;
    border-radius: 5px;
    background: #9a9a9a;
}

/* Volet */
.panel {
    display: flex;
    flex-direction: column;
    width: 343px;
    padding: 0 8px 13px 14px;
    background: #1f1f1f;
    border-left: 1px solid #555555;
    flex: none;
}

.panel-head {
    display: flex;
    align-items: center;
    gap: 19px;
    height: 43px;
    padding: 4px 3px 0 0;
}

.panel-head h2 {
    flex: 1;
    font-size: 14px;
    font-weight: 600;
}

.panel-head button {
    display: flex;
}

.panel-body {
    flex: 1;
    display: flex;
    flex-direction: column;
    align-items: center;
    padding: 12px 22px 0;
    background: #2e2e2e;
    position: relative;
    text-align: center;
}

.hero {
    overflow: visible;
}

.panel-body h1 {
    width: 240px;
    margin: 20px 0 48px;
    font-size: 38px;
    line-height: 53px;
}

.step {
    font-size: 17px;
    line-height: 24px;
    white-space: nowrap;
}

.progress {
    display: grid;
    place-items: center;
    margin: 15px 0 11px;
    font-size: 17px;
}

.progress svg,
.progress span {
    grid-area: 1 / 1;
}

.panel-body h3 {
    align-self: flex-start;
    display: flex;
    align-items: center;
    gap: 8px;
    margin-top: 71px;
    font-size: 17px;
    line-height: 24px;
}

.tips {
    align-self: flex-start;
    margin: 4px 5px 0 0;
    font-size: 14px;
    line-height: 20px;
    text-align: left;
}

.links {
    display: flex;
    justify-content: space-between;
    align-self: stretch;
    margin: auto -13px 2px -15px;
    font-size: 9px;
    white-space: nowrap;
}

.links a {
    color: #ffffff;
}

.panel-thumb {
    position: absolute;
    right: 2px;
    top: 15px;
    bottom: 2px;
    width: 6px;
    border-radius: 3px;
    background: #828282;
}

/* Barre d'état */
.status {
    display: flex;
    align-items: center;
    height: 23px;
    padding-left: 2px;
    background: #141414;
    border-top: 1px solid #3c3c3c;
    border-bottom: 1px solid #3c3c3c;
    flex: none;
}

.macro {
    margin: 0 16px 0 19px;
}

.access {
    display: flex;
    align-items: center;
    gap: 1px;
}

.status button {
    display: flex;
    align-items: center;
}

.views {
    display: flex;
    align-self: stretch;
    margin-left: auto;
    margin-right: 6px;
}

.view {
    width: 40px;
    justify-content: center;
}

.view.on {
    background: #262626;
}

.zoom {
    appearance: none;
    width: 100px;
    height: 1px;
    margin: 0 5px;
    background: #a0a0a0;
}

.zoom::-webkit-slider-thumb {
    appearance: none;
    width: 5px;
    height: 11px;
    background: #b0b0b0;
}

.pct {
    width: 43px;
    padding-right: 1px;
    text-align: right;
    white-space: nowrap;
}

/* Barre des tâches */
.taskbar {
    display: flex;
    align-items: center;
    height: 46px;
    padding: 0 12px 0 10px;
    background: linear-gradient(90deg, #1e2328 0%, #231f22 6%, #1f2326 12%, #29211e 21%, #262322 40%, #232424 49%, #2c2222 56%, #332316 64%, #332316 69%, #23242a 73%, #1e2328 76%, #20242a 100%);
    flex: none;
}

.taskbar button {
    display: flex;
    align-items: center;
    justify-content: center;
}

.task-search {
    display: flex;
    align-items: center;
    gap: 10px;
    width: 220px;
    height: 32px;
    margin: 0 4px 0 10px;
    padding: 0 11px;
    border-radius: 16px;
    background: #3d4043;
    border-top: 1px solid #55585a;
    font-size: 13px;
}

.task-search input {
    flex: 1;
    min-width: 0;
}

.task-search input::placeholder {
    color: #c8c8c8;
}

.apps {
    display: flex;
    gap: 4px;
}

.apps button {
    width: 28px;
    height: 40px;
    border-radius: 4px;
    position: relative;
}

.apps .current {
    background: #35302e;
}

.running::after,
.current::after {
    content: '';
    position: absolute;
    bottom: 2px;
    width: 4px;
    height: 3px;
    border-radius: 2px;
    background: #9a9a9a;
}

.current::after {
    width: 11px;
    background: #4cc2ff;
}

.logo {
    font: 700 7px 'Liberation Sans', sans-serif;
    fill: #ffffff;
}

.m365 {
    font: 700 8px 'Liberation Sans', sans-serif;
    fill: #ffffff;
}

.cmd {
    font: 700 6px 'Liberation Mono', monospace;
    fill: #ffffff;
}

.tray {
    display: flex;
    align-items: center;
    gap: 17px;
    margin-left: auto;
}

.tray .sys {
    gap: 7px;
}

.taskbar .clock {
    text-align: right;
    font-size: 12px;
}
```
